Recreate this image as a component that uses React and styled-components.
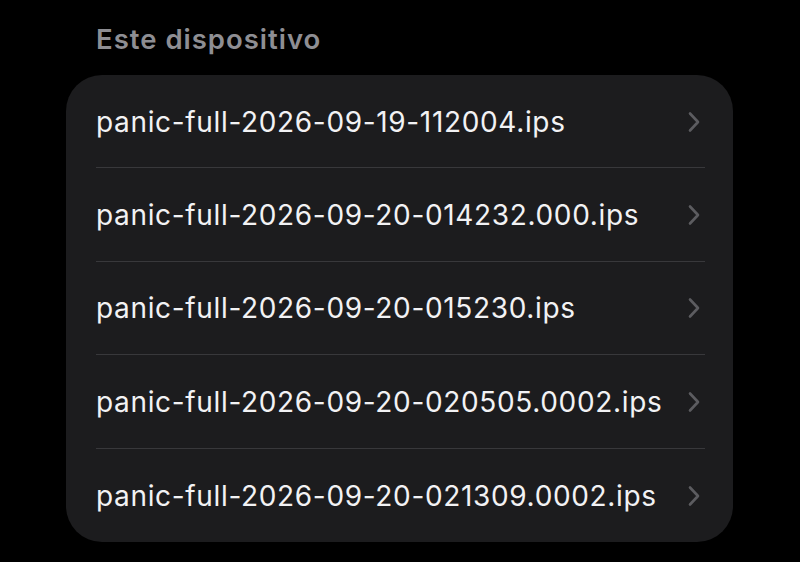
import React from "react";
import styled, { createGlobalStyle } from "styled-components";

const Global = createGlobalStyle`
  html, body { margin: 0; padding: 0; background: #000; }
  body { font-family: Inter, "Liberation Sans", sans-serif; -webkit-font-smoothing: antialiased; }
`;

const Page = styled.div`
  width: 800px;
  height: 562px;
  background: #000;
  box-sizing: border-box;
  padding: 22px 67px 0 66px;
  overflow: hidden;
`;

const SectionTitle = styled.div`
  color: #8e8e93;
  font-size: 27.5px;
  font-weight: 600;
  letter-spacing: 1px;
  line-height: 34px;
  padding-left: 30px;
  margin-bottom: 19px;
`;

const Card = styled.div`
  background: #1c1c1e;
  border-radius: 36px;
  padding-left: 30px;
  overflow: hidden;
`;

const Row = styled.div`
  display: flex;
  align-items: center;
  height: 93.4px;
  box-sizing: border-box;
  margin-right: 28px;
  padding-right: 5px;
  padding-top: 1px;
  border-bottom: ${(p) => (p.$last ? "none" : "1.5px solid #38383b")};
`;

const Name = styled.div`
  flex: 1;
  color: #f2f2f4;
  font-size: 28px;
  font-weight: 400;
  letter-spacing: 0.66px;
  white-space: nowrap;
`;

const Chevron = styled.svg`
  width: 12px;
  height: 22px;
  flex-shrink: 0;
`;

const files = [
  "panic-full-2026-09-19-112004.ips",
  "panic-full-2026-09-20-014232.000.ips",
  "panic-full-2026-09-20-015230.ips",
  "panic-full-2026-09-20-020505.0002.ips",
  "panic-full-2026-09-20-021309.0002.ips",
];

export default function App() {
  return (
    <Page>
      <Global />
      <SectionTitle>Este dispositivo</SectionTitle>
      <Card>
        {files.map((f, i) => (
          <Row key={f} $last={i === files.length - 1}>
            <Name>{f}</Name>
            <Chevron viewBox="0 0 12 22">
              <path d="M2 2.5 L10 11 L2 19.5" fill="none" stroke="#5c5c60" strokeWidth="2.6" strokeLinecap="round" strokeLinejoin="round" />
            </Chevron>
          </Row>
        ))}
      </Card>
    </Page>
  );
}
